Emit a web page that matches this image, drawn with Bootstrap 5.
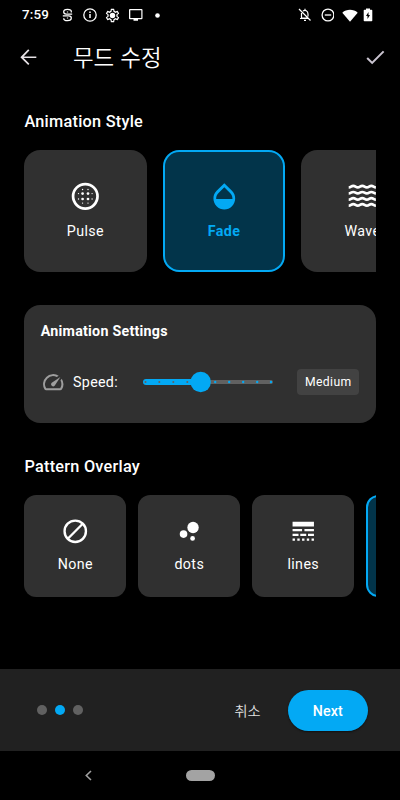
<!DOCTYPE html>
<html lang="ko" data-bs-theme="dark">
<head>
<meta charset="utf-8">
<meta name="viewport" content="width=device-width, initial-scale=1">
<title>무드 수정</title>
<link href="https://cdn.jsdelivr.net/npm/bootstrap@5.3.0/dist/css/bootstrap.min.css" rel="stylesheet">
<style>
body{background:#000;color:#fff;font-family:Roboto,"Noto Sans CJK KR",sans-serif;width:400px;height:800px;overflow:hidden;line-height:1}
svg{display:block;flex:none;fill:currentColor}
.stroked{fill:none;stroke:currentColor}
.status{height:30px;padding:0 27px 0 22px}
.clock{font-size:13.4px;font-weight:500;letter-spacing:.2px;width:40px}
.more{margin-left:12px}
.charge{margin-left:5px}
.appbar{height:54px;padding:0 12.5px 0 16px;color:#e6e1e5}
.appbar h1{font-size:22.4px;font-weight:350;margin:0 0 2px 32.5px;font-family:"Noto Sans CJK KR",sans-serif}
.done{color:#cac4d0}
main{height:585px;padding:26px 24.4px 0}
.heading{font-size:16.3px;font-weight:500;letter-spacing:.25px;margin:0;line-height:24px}
.strip{margin-top:16px}
.strip-lg{gap:16.3px}
.strip-sm{gap:12.2px}
.tile{flex:none;background:#303030;color:#fff;font-size:14.25px;letter-spacing:.4px;border:0}
.tile-lg{width:122.2px;height:122.2px;border-radius:16.3px;gap:12px;padding-bottom:4px}
.tile-sm{width:101.8px;height:101.8px;border-radius:12.2px;gap:11.5px;padding-bottom:3px}
.picked{background:#02344a;color:#03a9f4;border:2px solid #03a9f4;font-weight:700}
.panel{background:#303030;border-radius:16.3px;height:118px;padding:16.3px;margin:32.5px 0}
.panel h3{font-size:14.25px;font-weight:700;letter-spacing:.25px;line-height:21px;margin:0}
.speed-row{margin-top:20px;height:41px}
.gauge{color:#9e9e9e}
.speed-label{font-size:14.25px;letter-spacing:.3px;width:46px;margin-left:8px}
.slider{margin-left:22.5px}
.pill-value{width:62px;height:26px;background:#424242;border-radius:4px;font-size:12.2px;letter-spacing:.4px}
.bottom{height:82px;background:#212121;padding:0 32.5px 0 36.5px}
.step{width:10.2px;height:10.2px;border-radius:50%;background:#616161;margin-right:8.1px}
.step.on{background:#03a9f4}
.cancel{font-size:14.2px;font-weight:350;font-family:"Noto Sans CJK KR",sans-serif;color:#e0e0e0;margin-right:27.5px}
.next{width:79.5px;height:41px;background:#03a9f4;color:#fff;font-size:14.25px;font-weight:500;letter-spacing:.1px;line-height:42px;box-shadow:0 1px 2px #0008}
.system{height:49px;padding-left:84px;color:#a0a0a0}
.home{width:29px;height:11px;background:#a3a3a3;margin-left:93px}
</style>
<script src="https://cdn.jsdelivr.net/npm/bootstrap@5.3.0/dist/js/bootstrap.bundle.min.js"></script>
</head>
<body>
<div class="status d-flex align-items-center">
  <span class="clock">7:59</span>
  <svg class="stroked" width="11" height="14" viewBox="0 0 11 14" stroke-width="1.3"><path d="M9.300 4.600V3.500C9.300 2 8 1.300 5.500 1.300S1.700 2 1.700 3.800c0 1.600.8 2.300 2.500 2.300h6M.8 7.900h6c1.700 0 2.500.7 2.500 2.200 0 1.900-1.300 2.600-3.800 2.600S1.700 11.900 1.700 10.200M5.500 3.500v1M5.500 9.500v1"/></svg>
  <svg class="ms-2 stroked" width="16" height="16" viewBox="0 0 16 16" stroke-width="1.3"><circle cx="9" cy="8" r="6.200"/><path d="M9 7v4M9 4.400v1.500" stroke-width="1.500"/></svg>
  <svg class="ms-2" width="15" height="15" viewBox="1 1 22 22"><path d="M19.430 12.980c.04-.32.07-.64.07-.98s-.03-.66-.07-.98l2.110-1.650c.19-.15.24-.42.12-.64l-2-3.460c-.12-.22-.39-.3-.61-.22l-2.490 1c-.52-.4-1.080-.73-1.690-.98l-.38-2.650A.49.49 0 0 0 14 2h-4c-.25 0-.46.18-.49.42l-.38 2.650c-.61.25-1.170.59-1.690.98l-2.490-1c-.23-.09-.49 0-.61.22l-2 3.460c-.13.22-.07.49.12.64l2.110 1.650a7.930 7.930 0 0 0 0 1.960l-2.110 1.650c-.19.15-.24.42-.12.64l2 3.460c.12.22.39.3.61.22l2.490-1c.52.4 1.080.73 1.690.98l.38 2.650c.03.24.24.42.49.42h4c.25 0 .46-.18.49-.42l.38-2.650c.61-.25 1.170-.59 1.690-.98l2.490 1c.23.09.49 0 .61-.22l2-3.460c.12-.22.07-.49-.12-.64zM13 20h-2l-.4-2.600-2.900-1.600-2.400 1-1-1.700 2.100-1.600v-3L4.300 8.900l1-1.700 2.400 1 2.900-1.700L11 4h2l.4 2.500 2.900 1.700 2.400-1 1 1.700-2.100 1.600v3l2.100 1.600-1 1.700-2.400-1-2.900 1.600z" fill-rule="evenodd"/><circle cx="12" cy="12" r="4"/></svg>
  <svg class="ms-2" width="15" height="14" viewBox="0 0 15 14"><path d="M2 1h11.500a1 1 0 0 1 1 1v8.300a1 1 0 0 1-1 1H10v1.500H5.500v-1.500H2a1 1 0 0 1-1-1V2a1 1 0 0 1 1-1zm.3 1.300V10h11V2.300z" fill-rule="evenodd"/></svg>
  <svg class="more" width="5" height="5" viewBox="0 0 5 5"><circle cx="2.500" cy="2.500" r="2.300"/></svg>
  <div class="d-flex align-items-center ms-auto">
    <svg class="stroked" width="14" height="14" viewBox="0 0 14 14" stroke-width="1.200"><path d="M1 1l11.500 11.500M3.500 5v5.200h6M2 10.500h8M5 3c2-1.500 5-.4 5 3v2.500M7 .8v1.500M6 12.300h2"/></svg>
    <svg class="stroked ms-2 me-1" width="14" height="14" viewBox="0 0 14 14" stroke-width="1.300"><circle cx="8" cy="7" r="5.900"/><path d="M4.800 7h6.400"/></svg>
    <svg class="ms-1" width="16" height="13" viewBox="0 0 16 13"><path d="M.3 3.700C4.500-.1 11.500-.1 15.700 3.700L8 12.700z"/></svg>
    <svg class="charge" width="10" height="14" viewBox="0 0 10 14"><path fill-rule="evenodd" d="M3 .5h4v1.200h1.500a.8.8 0 0 1 .8.8v10a.8.8 0 0 1-.8.8h-7a.8.8 0 0 1-.8-.8v-10a.8.8 0 0 1 .8-.8H3zM5.500 4L3 8h1.500v3L7 7H5.500z"/></svg>
  </div>
</div>
<header class="appbar d-flex align-items-center">
  <svg width="24.400" height="24.400" viewBox="0 0 24 24"><path d="M20 11.200H7.500l5.700-5.700L12 4.300 4.300 12l7.700 7.700 1.200-1.200-5.700-5.700H20z"/></svg>
  <h1>무드 수정</h1>
  <svg class="done ms-auto" width="24.400" height="24.400" viewBox="0 0 24 24"><path d="M9 16.170L4.830 12l-1.420 1.410L9 19 21 7l-1.410-1.410z"/></svg>
</header>
<main>
  <h2 class="heading">Animation Style</h2>
  <div class="strip strip-lg d-flex overflow-hidden">
    <div class="tile tile-lg d-flex flex-column align-items-center justify-content-center">
      <svg width="32.600" height="32.600" viewBox="0 0 24 24"><circle class="stroked" cx="12" cy="12" r="9" stroke-width="2"/><circle cx="10" cy="10" r="1"/><circle cx="14" cy="10" r="1"/><circle cx="10" cy="14" r="1"/><circle cx="14" cy="14" r="1"/><circle cx="10" cy="7" r=".5"/><circle cx="14" cy="7" r=".5"/><circle cx="10" cy="17" r=".5"/><circle cx="14" cy="17" r=".5"/><circle cx="7" cy="10" r=".5"/><circle cx="7" cy="14" r=".5"/><circle cx="17" cy="10" r=".5"/><circle cx="17" cy="14" r=".5"/></svg>
      <span>Pulse</span>
    </div>
    <div class="tile tile-lg picked d-flex flex-column align-items-center justify-content-center">
      <svg width="32.600" height="32.600" viewBox="0 0 24 24"><path d="M17.660 8L12 2.350 6.340 8C4.780 9.560 4 11.640 4 13.640s.78 4.110 2.340 5.670 3.610 2.350 5.660 2.350 4.100-.79 5.660-2.350S20 15.640 20 13.640 19.220 9.560 17.660 8zM6 14c.01-2 .62-3.270 1.760-4.400L12 5.270l4.240 4.380C17.380 10.770 17.990 12 18 14H6z"/></svg>
      <span>Fade</span>
    </div>
    <div class="tile tile-lg d-flex flex-column align-items-center justify-content-center">
      <svg class="stroked" width="32.600" height="32.600" viewBox="0 0 24 24" stroke-width="1.950"><path id="ripple" d="M2 5.400c1.700 0 1.700-1.100 3.350-1.100s1.700 1.100 3.300 1.100 1.700-1.100 3.350-1.100 1.700 1.100 3.350 1.100 1.700-1.100 3.300-1.100 1.700 1.100 3.350 1.100"/><use href="#ripple" y="4.500"/><use href="#ripple" y="9"/><use href="#ripple" y="13.500"/></svg>
      <span>Wave</span>
    </div>
  </div>
  <section class="panel">
    <h3>Animation Settings</h3>
    <div class="speed-row d-flex align-items-center">
      <svg class="gauge" width="24.400" height="24.400" viewBox="0 0 24 24"><path d="M20.380 8.570l-1.230 1.850a8 8 0 0 1-.22 7.580H5.070A8 8 0 0 1 15.580 6.850l1.850-1.230A10 10 0 0 0 3.350 19a2 2 0 0 0 1.720 1h13.850a2 2 0 0 0 1.740-1 10 10 0 0 0-.27-10.440zM10.590 15.410a2 2 0 0 0 2.830 0l5.660-8.490-8.490 5.660a2 2 0 0 0 0 2.830z"/></svg>
      <span class="speed-label">Speed:</span>
      <svg class="slider" width="132" height="24" viewBox="0 0 132 24" role="img" aria-label="Speed"><rect x="60" y="10" width="71" height="4" rx="2" fill="#616161"/><rect x="1" y="9" width="65" height="6" rx="3" fill="#03a9f4"/><g fill="#616161"><circle cx="3.500" cy="12" r="1"/><circle cx="17.300" cy="12" r="1"/><circle cx="31.300" cy="12" r="1"/><circle cx="45.300" cy="12" r="1"/></g><g fill="#03a9f4"><circle cx="73.200" cy="12" r="1.200"/><circle cx="87.200" cy="12" r="1.200"/><circle cx="101.200" cy="12" r="1.200"/><circle cx="115.200" cy="12" r="1.200"/><circle cx="129" cy="12" r="1.200"/><circle cx="58.700" cy="12" r="10.200"/></g></svg>
      <span class="pill-value ms-auto d-flex align-items-center justify-content-center">Medium</span>
    </div>
  </section>
  <h2 class="heading">Pattern Overlay</h2>
  <div class="strip strip-sm d-flex overflow-hidden">
    <div class="tile tile-sm d-flex flex-column align-items-center justify-content-center">
      <svg class="stroked" width="28.500" height="28.500" viewBox="0 0 24 24" stroke-width="2"><circle cx="12" cy="12" r="9"/><path d="M5.500 18.500l13-13"/></svg>
      <span>None</span>
    </div>
    <div class="tile tile-sm d-flex flex-column align-items-center justify-content-center">
      <svg width="28.500" height="28.500" viewBox="0 0 24 24"><circle cx="7.200" cy="14.400" r="3.200"/><circle cx="14.800" cy="18" r="2"/><circle cx="15.200" cy="8.800" r="4.800"/></svg>
      <span>dots</span>
    </div>
    <div class="tile tile-sm d-flex flex-column align-items-center justify-content-center">
      <svg width="28.500" height="28.500" viewBox="0 0 24 24"><path d="M3 16h5v-2H3v2zm6.500 0h5v-2h-5v2zm6.500 0h5v-2h-5v2zM3 20h2v-2H3v2zm4 0h2v-2H7v2zm4 0h2v-2h-2v2zm4 0h2v-2h-2v2zm4 0h2v-2h-2v2zM3 12h8v-2H3v2zm10 0h8v-2h-8v2zM3 4v4h18V4H3z"/></svg>
      <span>lines</span>
    </div>
    <div class="tile tile-sm picked"></div>
  </div>
</main>
<footer class="bottom d-flex align-items-center">
  <span class="step"></span><span class="step on"></span><span class="step"></span>
  <span class="cancel ms-auto">취소</span>
  <button class="next btn rounded-pill p-0 border-0">Next</button>
</footer>
<nav class="system d-flex align-items-center">
  <svg class="stroked" width="9" height="11" viewBox="0 0 9 11" stroke-width="1.600"><path d="M7 1L2.300 5.500 7 10"/></svg>
  <span class="home rounded-pill"></span>
</nav>
</body>
</html>
